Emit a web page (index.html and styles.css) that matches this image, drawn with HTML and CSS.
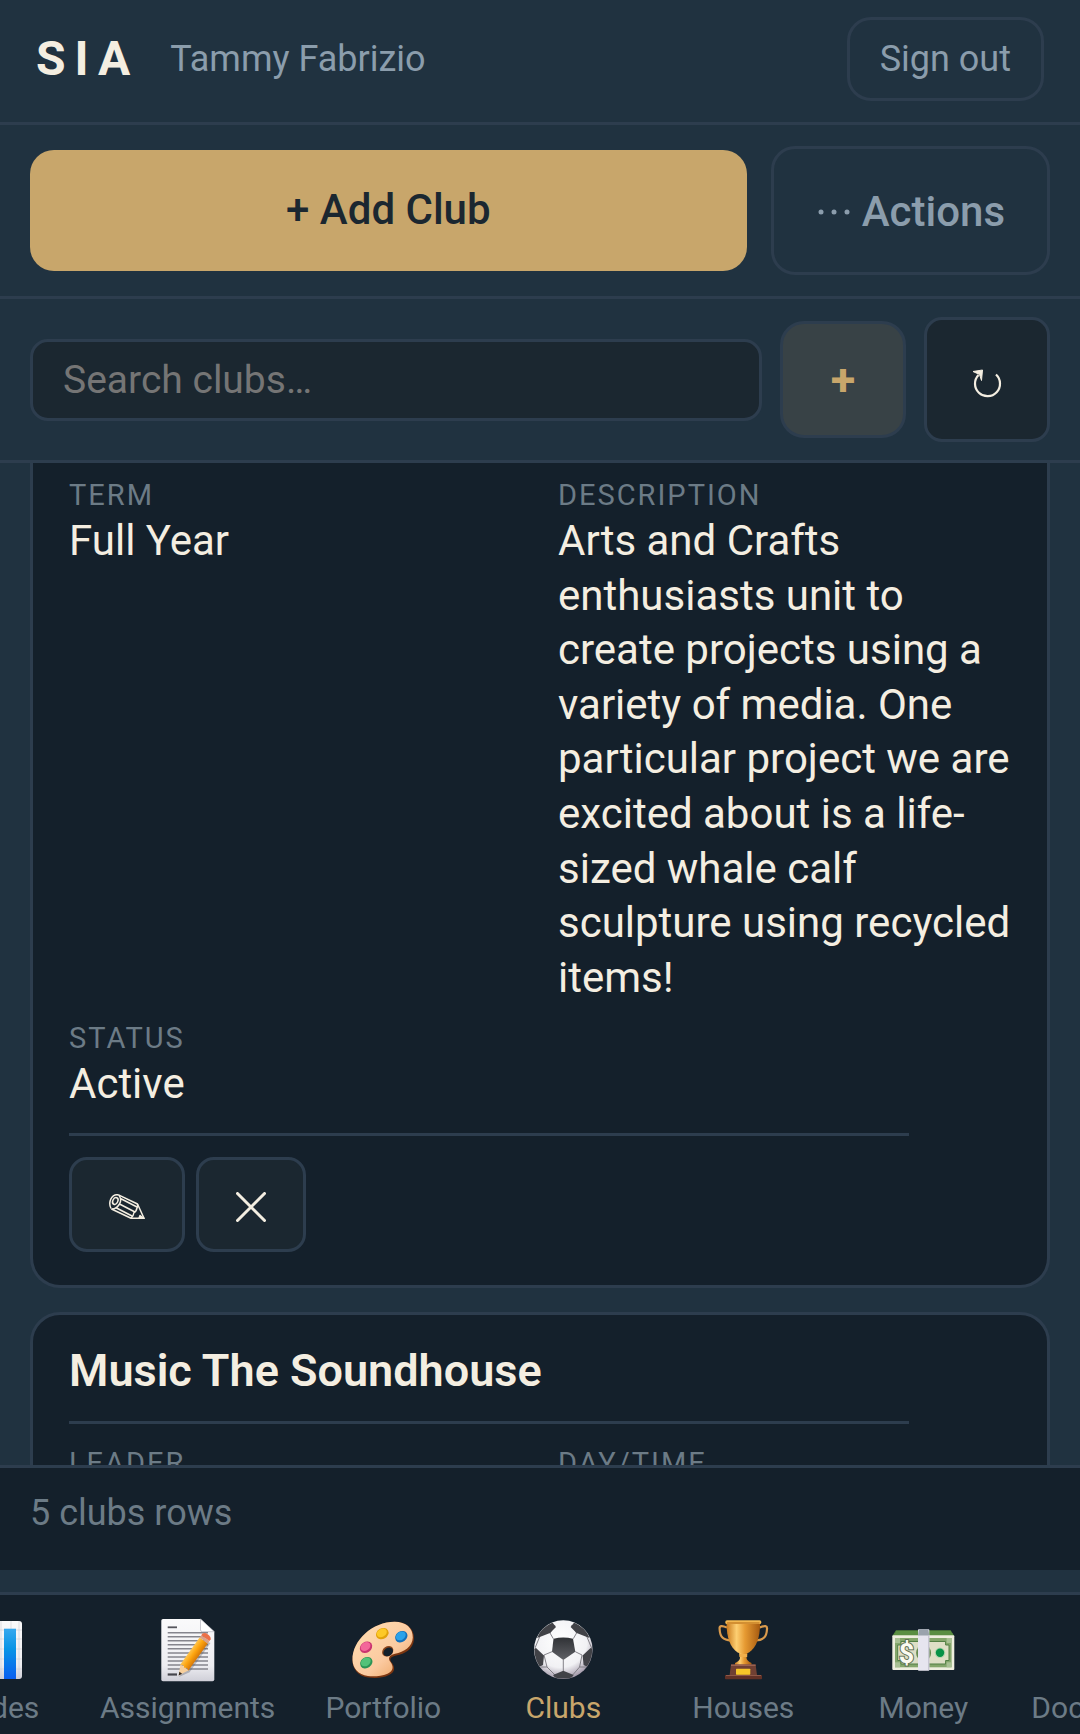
FILE: index.html
```html
<!DOCTYPE html>
<html lang="en">
<head>
<meta charset="utf-8">
<meta name="viewport" content="width=device-width, initial-scale=1">
<title>SIA – Clubs</title>
<link rel="stylesheet" href="styles.css">
</head>
<body>
<div class="app">
  <header class="topbar">
    <h1 class="brand">SIA</h1>
    <span class="user">Tammy Fabrizio</span>
    <button class="signout" type="button">Sign out</button>
  </header>

  <div class="actions">
    <button class="add" type="button">+ Add Club</button>
    <button class="more" type="button">
      <svg width="36" height="12" viewBox="0 0 36 12" aria-hidden="true"><g fill="currentColor"><circle cx="5" cy="6" r="2.500"/><circle cx="18" cy="6" r="2.500"/><circle cx="31" cy="6" r="2.500"/></g></svg>
      Actions
    </button>
  </div>

  <div class="search">
    <input class="search-input" type="search" placeholder="Search clubs…" aria-label="Search clubs">
    <button class="quick-add" type="button" aria-label="Add">+</button>
    <button class="refresh" type="button" aria-label="Refresh">
      <svg width="30" height="30" viewBox="0 0 30 30" aria-hidden="true"><path d="M24 5.500A12.500 12.500 0 1 1 6.500 6" fill="none" stroke="currentColor" stroke-width="2.200"/><path d="M1 2.500L10.500 1L9.500 11.500L7.500 5.500Z" fill="currentColor" stroke="currentColor" stroke-width="1"/></svg>
    </button>
  </div>

  <main class="list">
    <article class="card card-continued">
      <dl class="fields">
        <div><dt>Term</dt><dd>Full Year</dd></div>
        <div><dt>Description</dt><dd>Arts and Crafts enthusiasts unit to create projects using a variety of media. One particular project we are excited about is a life-sized whale calf sculpture using recycled items!</dd></div>
        <div><dt>Status</dt><dd>Active</dd></div>
      </dl>
      <div class="card-tools">
        <button class="tool" type="button" aria-label="Edit">
          <svg width="36" height="26" viewBox="0 0 36 26" fill="none" stroke="currentColor" stroke-width="1.500" stroke-linejoin="round" aria-hidden="true"><path d="M2 14.500C-.5 10 1 3 6 1Q8 .2 10 1.200L28.500 10L35 24.300H22L2.500 15"/><ellipse cx="6.300" cy="7" rx="2.500" ry="3.600" transform="rotate(25 6.300 7)"/><path d="M10 1.200Q13 6 10.500 10Q7 15.500 2.500 15M11.500 4.500L28 13M10.500 10L26 18M7.500 14L23 22M28.500 10Q29 13 28 14Q27 18 25 18.500Q24.500 22 22 24.300"/><path d="M31 21.500L35 24.300H30Z" fill="currentColor"/></svg>
        </button>
        <button class="tool" type="button" aria-label="Delete">
          <svg width="30" height="30" viewBox="0 0 30 30" aria-hidden="true"><path d="M1.500 1.500L28.500 28.500M28.500 1.500L1.500 28.500" stroke="currentColor" stroke-width="3" stroke-linecap="round"/></svg>
        </button>
      </div>
    </article>

    <article class="card">
      <h2 class="card-title">Music The Soundhouse</h2>
      <dl class="fields">
        <div><dt>Leader</dt><dd></dd></div>
        <div><dt>Day/Time</dt><dd></dd></div>
      </dl>
    </article>
  </main>

  <footer class="status">5 clubs rows</footer>

  <nav class="tabs" aria-label="Sections">
    <a class="tab" href="#grades">
      <svg class="icon" viewBox="0 0 64 64" aria-hidden="true">
        <defs><linearGradient id="bar" x1="0" y1="0" x2="0" y2="1"><stop offset="0" stop-color="#36a8ee"/><stop offset=".4" stop-color="#0894e6"/><stop offset="1" stop-color="#0a5ff0"/></linearGradient>
        <linearGradient id="paper" x1="0" y1="0" x2="0" y2="1"><stop offset="0" stop-color="#fafafb"/><stop offset=".75" stop-color="#ededf1"/><stop offset="1" stop-color="#cfcfd8"/></linearGradient></defs>
        <rect x="2" y="3" width="60" height="58" rx="3" fill="url(#paper)"/>
        <path d="M2 12H62M2 21H62M2 31H62M2 41H62M2 51H62M22 3V61M41 3V61M51 3V61M59 3V61" stroke="#cdccd4" stroke-width=".6"/>
        <rect x="8" y="30" width="11" height="31" fill="#36b34a"/><rect x="26" y="20" width="11" height="41" fill="#e5493a"/>
        <rect x="44" y="10.700" width="12" height="50.300" fill="url(#bar)"/>
      </svg>
      <span>Grades</span></a>
    <a class="tab" href="#assignments">
      <svg class="icon" viewBox="0 0 64 64" aria-hidden="true">
        <defs><linearGradient id="wood" x1="0" y1="0" x2="1" y2="0"><stop offset="0" stop-color="#ffc44d"/><stop offset=".45" stop-color="#fda50f"/><stop offset="1" stop-color="#d87908"/></linearGradient></defs>
        <path d="M7 1H44.500L58.300 13.700V61.500Q58.300 63.300 56.500 63.300H7Q5.300 63.300 5.300 61.500V2.700Q5.300 1 7 1Z" fill="url(#paper)"/>
        <path d="M44.500 1L58.300 13.700H46.500Q44.500 13.700 44.500 12Z" fill="#fff" stroke="#b5b5bd" stroke-width=".7"/>
        <path d="M11.700 9.300H21" stroke="#55555c" stroke-width="1.800"/>
        <path d="M11.700 14.700H52M11.700 18.700H52M11.700 22.700H52M11.700 26.700H52M11.700 30.800H52M11.700 34.900H52M11.700 38.900H52M11.700 43H52M11.700 47H52M11.700 51H52" stroke="#85858d" stroke-width="1.500"/>
        <path d="M11.700 56.500H21" stroke="#45454c" stroke-width="2.200"/>
        <g transform="translate(22.700 57.500) rotate(35.500)">
          <path d="M1 1L7 -9V-45L3 -44Z" fill="#55555c" opacity=".35"/>
          <path d="M0 0L-5 -10H5Z" fill="#f7cf9c"/><path d="M0 0L-1.700 -3.500H1.700Z" fill="#33291f"/>
          <path d="M-5 -9.500Q-2.500 -12 0 -9.500Q2.500 -12 5 -9.500V-43H-5Z" fill="url(#wood)"/>
          <path d="M-5 -43H5V-46H-5Z" fill="#d9a389"/><path d="M-5 -46V-48Q-4 -50.500 0 -50.500Q4 -50.500 5 -48V-46Z" fill="#ec7048"/>
        </g>
      </svg>
      <span>Assignments</span></a>
    <a class="tab" href="#portfolio">
      <svg class="icon" viewBox="0 0 64 64" aria-hidden="true">
        <defs><linearGradient id="pal" x1="0" y1="0" x2="1" y2="1"><stop offset="0" stop-color="#ffdfb3"/><stop offset=".6" stop-color="#fbcaa0"/><stop offset="1" stop-color="#e99b55"/></linearGradient></defs>
        <path d="M1.500 43C1 22 22 3.700 44 3.700C56 3.700 63.500 11 63 21C62.500 31 54 36 45 37.500C38 39 38.500 42 41 45C44 49 44.500 54 38 57C31 60.500 23 60.300 17 59.500C7 58 1.800 51 1.500 43Z" fill="#7b3510"/>
        <path d="M1.500 42C1 22 22 3.700 43.500 3.700C55 3.700 62 10 61.800 19.500C61.500 29 53 34 44 35.700C36.500 37.500 37.500 41.500 39.500 44C42.500 48 43 53 36.500 55.700C30 58.500 22 58.700 17 58C7 56.500 1.800 50 1.500 42Z" fill="url(#pal)"/>
        <ellipse cx="36.700" cy="33.300" rx="6" ry="4.800" transform="rotate(-35 36.700 33.300)" fill="#8b451c"/><ellipse cx="37.200" cy="34" rx="5.200" ry="4" transform="rotate(-35 37 34)" fill="#14202b"/>
        <ellipse cx="31.300" cy="15.700" rx="6.600" ry="5.300" transform="rotate(-30 31.300 15.700)" fill="#e2a20b"/><ellipse cx="30.800" cy="14.900" rx="5.300" ry="4" transform="rotate(-30 30.800 14.900)" fill="#fdc928"/>
        <ellipse cx="50.300" cy="18.700" rx="6.600" ry="5.300" transform="rotate(-35 50.300 18.700)" fill="#1470b9"/><ellipse cx="49.800" cy="17.900" rx="5.300" ry="4" transform="rotate(-35 49.800 17.900)" fill="#2ba2ea"/>
        <ellipse cx="15" cy="29.300" rx="6.600" ry="5.300" transform="rotate(-35 15 29.300)" fill="#cb3470"/><ellipse cx="14.500" cy="28.500" rx="5.300" ry="4" transform="rotate(-35 14.500 28.500)" fill="#f3679a"/>
        <ellipse cx="15.300" cy="44.700" rx="6.600" ry="5.300" transform="rotate(-35 15.300 44.700)" fill="#2c9355"/><ellipse cx="14.800" cy="43.900" rx="5.300" ry="4" transform="rotate(-35 14.800 43.900)" fill="#54c279"/>
      </svg>
      <span>Portfolio</span></a>
    <a class="tab tab-active" href="#clubs" aria-current="page">
      <svg class="icon" viewBox="0 0 64 64" aria-hidden="true">
        <defs><radialGradient id="ball" cx=".45" cy=".35" r=".65"><stop offset="0" stop-color="#fff"/><stop offset=".7" stop-color="#f1f1f4"/><stop offset="1" stop-color="#a59cac"/></radialGradient>
        <linearGradient id="patch" x1="0" y1="0" x2="0" y2="1"><stop offset="0" stop-color="#303236"/><stop offset="1" stop-color="#606166"/></linearGradient>
        <clipPath id="round"><circle cx="32.300" cy="31.600" r="29"/></clipPath></defs>
        <circle cx="32.300" cy="31.600" r="29.300" fill="url(#ball)"/>
        <g clip-path="url(#round)">
          <path d="M22.300 20.700L19 15L24 7M42.300 20.700L45.600 15L40.600 7M44.300 33.700L51 37M21 33.700L13 37M32.300 42V53M13 37L16 49L24 57M51 37L48.600 49L41.700 57M16 49L10 49M48.600 49L55 49M9 18L4 30M55.600 18L60.600 30" fill="none" stroke="#77767d" stroke-width=".9"/>
          <path d="M22.500 20.700Q32.300 18.500 42 20.700L44.300 33.700L32.300 42L21 33.700Z" fill="url(#patch)"/>
          <g fill="#414247"><path d="M6 20L10 11L21 4L25 9L19 15L10 18.500Z"/><path d="M58.600 20L54.600 11L43.600 4L39.600 9L45.600 15L54.600 18.500Z"/><path d="M2 31L5 30L13 37.500L12 47L8 49L3 41Z"/><path d="M62.600 31L59.600 30L51.600 37.500L52.600 47L56.600 49L61.600 41Z"/><path d="M22 57L32.300 52.700L42.600 57L39 62H25.700Z"/></g>
        </g>
      </svg>
      <span>Clubs</span></a>
    <a class="tab" href="#houses">
      <svg class="icon" viewBox="0 0 64 64" aria-hidden="true">
        <defs><linearGradient id="gold" x1="0" y1="0" x2="1" y2="0"><stop offset="0" stop-color="#c9781b"/><stop offset=".3" stop-color="#fdcf72"/><stop offset=".55" stop-color="#e69a32"/><stop offset="1" stop-color="#a65a10"/></linearGradient></defs>
        <g fill="none" stroke="#d99a4c" stroke-width="2.200"><path d="M16 9.500Q8 6 8.600 11C9 19 12 22 20 22.500"/><path d="M48.600 9.500Q56.600 6 56 11C55.600 19 52.600 22 44.600 22.500"/></g>
        <path d="M28 34H36.600L35.500 40Q36 43 40.500 45V48H24V45Q28.600 43 29 40Z" fill="url(#gold)"/><path d="M28.500 36H36.200V39H28.500Z" fill="#f0ae4b"/>
        <path d="M15.500 5H49.100C49 20 45.500 29 38 34.500Q32.300 37 26.600 34.500C19 29 15.700 20 15.500 5Z" fill="url(#gold)"/>
        <rect x="14.300" y="2.300" width="36" height="3.800" rx="1.700" fill="#f4b84f"/><path d="M16 5H48.600" stroke="#b16716" stroke-width="1"/>
        <path d="M20 46.500H44.600L46 57H18.600Z" fill="#704033"/><path d="M20 46.500H44.600V48H20Z" fill="#9b6250"/>
        <rect x="14" y="57" width="37" height="4.300" rx=".8" fill="#613126"/><path d="M15 57.500H50" stroke="#8e5848" stroke-width="1"/>
        <rect x="25" y="50.700" width="14.300" height="6" rx=".6" fill="#f6c729"/>
      </svg>
      <span>Houses</span></a>
    <a class="tab" href="#money">
      <svg class="icon" viewBox="0 0 64 64" aria-hidden="true">
        <path d="M5 12.300H59.600L63.300 18H1.300Z" fill="#52863a"/><path d="M5 14H60M3.500 16H62" stroke="#77a55f" stroke-width=".5"/>
        <rect x="1.300" y="17.300" width="62" height="34.800" rx="1" fill="#eeeede"/>
        <rect x="4" y="20" width="56.600" height="29.300" fill="#84a66b"/>
        <path d="M10 23.500H54.600V27H58V42.500H54.600V46H10V42.500H6.700V27H10Z" fill="#dedfc6" stroke="#537f44" stroke-width="1"/>
        <g fill="#a8c093"><rect x="4" y="20" width="5" height="5"/><rect x="55.600" y="20" width="5" height="5"/><rect x="4" y="44.300" width="5" height="5"/><rect x="55.600" y="44.300" width="5" height="5"/></g>
        <ellipse cx="32.600" cy="35" rx="7.500" ry="8" fill="#678c50"/>
        <circle cx="49" cy="34.700" r="5.300" fill="#b7d5b0"/><circle cx="49" cy="34.700" r="4.200" fill="#079247"/>
        <text class="bill" x="15.500" y="44.500" text-anchor="middle">$</text>
        <rect x="27" y="11.300" width="11.300" height="41.400" rx=".8" fill="#e6e5ef"/><path d="M28 11.300H37.300L38.300 17.500H27Z" fill="#9aa3ac"/><path d="M37.800 18V52" stroke="#babac8" stroke-width="1"/>
      </svg>
      <span>Money</span></a>
    <a class="tab" href="#documents"><span class="icon"></span><span>Documents</span></a>
  </nav>
</div>
</body>
</html>
```
FILE: styles.css
```css
:root {
  --bg: #203240;
  --panel: #14202b;
  --field: #1b2730;
  --line: #2d3d4e;
  --cream: #f4eee1;
  --muted: #8b9dac;
  --dim: #6c7b86;
  --gold: #c8a66b;
}

* { box-sizing: border-box; }

body {
  margin: 0;
  background: var(--bg);
  color: var(--cream);
  font-family: Roboto, "Noto Sans", sans-serif;
}

button, input { font: inherit; color: inherit; }

button {
  display: flex;
  align-items: center;
  justify-content: center;
  border: 3px solid var(--line);
  border-radius: 24px;
  background: none;
  cursor: pointer;
}

.app {
  display: flex;
  flex-direction: column;
  height: 100vh;
  overflow: hidden;
}

/* Top bar */
.topbar {
  display: flex;
  align-items: center;
  padding: 17px 36px 21px;
  border-bottom: 3px solid var(--line);
  color: var(--muted);
  font-size: 36px;
  line-height: 42px;
}

.brand {
  margin: 0 31px 0 0;
  color: var(--cream);
  font-size: 48px;
  font-weight: 700;
  line-height: 54px;
  letter-spacing: 9px;
}

.signout {
  margin-left: auto;
  padding: 18px 30px;
}

/* Primary actions */
.actions {
  display: flex;
  align-items: center;
  gap: 24px;
  padding: 21px 30px;
  border-bottom: 3px solid var(--line);
  font-size: 42px;
  font-weight: 500;
  line-height: 49px;
}

.add {
  flex: 1;
  padding: 35px 36px 37px;
  border: 0;
  background: var(--gold);
  color: var(--field);
}

.more {
  gap: 10px;
  padding: 38px 42px 36px;
  color: var(--muted);
}

/* Search row */
.search {
  display: flex;
  align-items: center;
  gap: 18px;
  padding: 18px 30px;
  border-bottom: 3px solid var(--line);
}

.search-input {
  flex: 1;
  min-width: 0;
  padding: 15px 30px;
  border: 3px solid var(--line);
  border-radius: 18px;
  background: var(--field);
  font-size: 39px;
  line-height: 46px;
  appearance: none;
}

.search-input::placeholder { color: #757575; opacity: 1; }

.quick-add {
  width: 126px;
  padding: 30px 0;
  background: #384246;
  color: var(--gold);
  font-size: 45px;
  font-weight: 700;
  line-height: 51px;
}

.refresh {
  width: 126px;
  padding: 49px 0 40px;
  border-radius: 18px;
  background: var(--field);
}

/* Club cards */
.list {
  display: flex;
  flex: 1;
  flex-direction: column;
  gap: 24px;
  min-height: 0;
  padding: 0 30px;
  overflow: hidden;
}

.card {
  flex: none;
  padding: 28px 36px 33px;
  border: 3px solid var(--line);
  border-radius: 30px;
  background: var(--panel);
}

.card-continued {
  padding-top: 14px;
  border-top: 0;
  border-top-left-radius: 0;
  border-top-right-radius: 0;
}

.card-title {
  margin: 0 102px 21px 0;
  padding-bottom: 23px;
  border-bottom: 3px solid var(--line);
  font-size: 45px;
  font-weight: 600;
  line-height: 55px;
}

.fields {
  display: grid;
  grid-template-columns: 1fr 1fr;
  gap: 15px 36px;
  margin: 0;
}

.fields dt {
  color: var(--dim);
  font-size: 29px;
  line-height: 37px;
  letter-spacing: 2px;
  text-transform: uppercase;
}

.fields dd {
  margin: 0;
  font-size: 42px;
  line-height: 1.3;
}

.card-tools {
  display: flex;
  gap: 11px;
  margin: 21px 102px 0 0;
  padding-top: 21px;
  border-top: 3px solid var(--line);
}

.tool {
  padding: 32px 37px 27px;
  border-radius: 18px;
  background: var(--field);
}

/* Row count */
.status {
  margin-bottom: 22px;
  padding: 24px 30px 36px;
  border-top: 3px solid var(--line);
  background: var(--panel);
  color: var(--dim);
  font-size: 36px;
  line-height: 42px;
}

/* Bottom tabs, scrolled part of the way along */
.tabs {
  display: flex;
  padding: 23px 0 8px;
  border-top: 3px solid var(--line);
  background: var(--panel);
  overflow: hidden;
}

.tab {
  display: flex;
  flex: none;
  flex-direction: column;
  align-items: center;
  gap: 8px;
  min-width: 180px;
  padding: 0 18px;
  color: var(--dim);
  font-size: 30px;
  line-height: 36px;
  text-decoration: none;
}

.tab:first-child { margin-left: -98px; }

.tab-active { color: var(--gold); }

.icon { width: 64px; height: 64px; }

.bill {
  fill: #fbfaf0;
  stroke: #5f6f52;
  stroke-width: 2px;
  paint-order: stroke;
  font-size: 27px;
  font-weight: 700;
}
```
